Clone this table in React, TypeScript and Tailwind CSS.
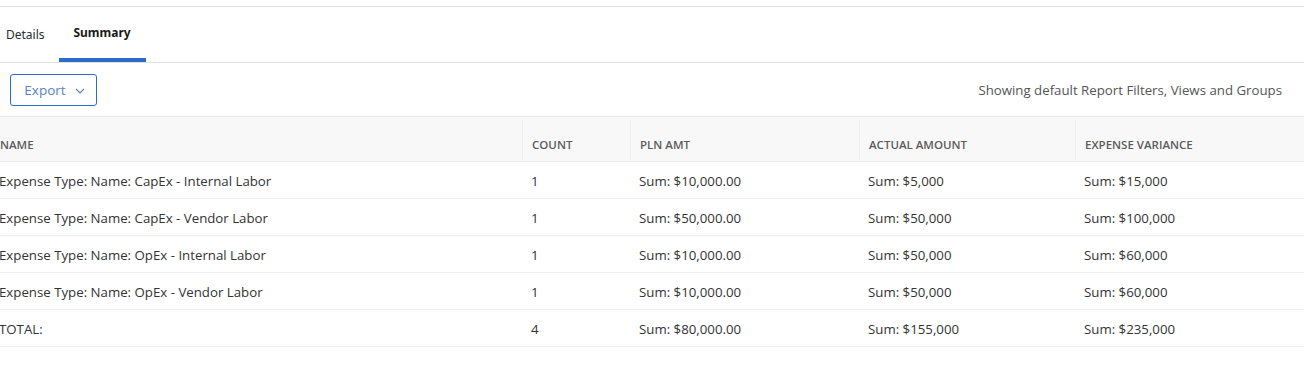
import React from "react";

const rows = [
  ["Expense Type: Name: CapEx - Internal Labor", "1", "Sum: $10,000.00", "Sum: $5,000", "Sum: $15,000"],
  ["Expense Type: Name: CapEx - Vendor Labor", "1", "Sum: $50,000.00", "Sum: $50,000", "Sum: $100,000"],
  ["Expense Type: Name: OpEx - Internal Labor", "1", "Sum: $10,000.00", "Sum: $50,000", "Sum: $60,000"],
  ["Expense Type: Name: OpEx - Vendor Labor", "1", "Sum: $10,000.00", "Sum: $50,000", "Sum: $60,000"],
  ["TOTAL:", "4", "Sum: $80,000.00", "Sum: $155,000", "Sum: $235,000"],
];

const headers = ["NAME", "COUNT", "PLN AMT", "ACTUAL AMOUNT", "EXPENSE VARIANCE"];

export default function App() {
  return (
    <div className="w-[1304px] h-[386px] bg-white overflow-hidden pt-[6px]" style={{ fontFamily: "'Open Sans', 'Liberation Sans', sans-serif" }}>
      <div className="border-t border-[#e3e3e3]">
        <div className="h-[56px] flex items-end border-b border-[#e1e1e1]">
          <div className="h-full flex items-center pl-[6px] pr-[15px] text-[12px] text-[#2c2c2c] pt-[1px]" style={{ fontFamily: "'Noto Sans', 'Open Sans', sans-serif" }}>
            Details
          </div>
          <div className="h-full flex flex-col w-[87px] -ml-[1px]">
            <div className="flex-1 flex items-center justify-center text-[12px] font-bold text-[#1a1a1a]" style={{ fontFamily: "'Noto Sans', 'Open Sans', sans-serif" }}>
              Summary
            </div>
            <div className="h-[4px] bg-[#2d6bc8]" />
          </div>
        </div>
        <div className="h-[53px] flex items-center justify-between pl-[10px] pr-[22px]">
          <button className="h-[32px] w-[87px] border border-[#2d6bc8] rounded-[3px] flex items-center justify-center gap-[9px] text-[13.5px] text-[#5b80c6] mt-[1px] pl-[2px]">
            <span>Export</span>
            <svg width="10" height="6" viewBox="0 0 10 6" fill="none" className="mt-[1px]">
              <path d="M1 1l4 4 4-4" stroke="#5a7fc8" strokeWidth="1.1" />
            </svg>
          </button>
          <div className="text-[13.25px] text-[#555555] mt-[2px]">Showing default Report Filters, Views and Groups</div>
        </div>
        <div className="border-t border-[#e8e8e8]">
          <div className="grid grid-cols-[522px_108px_229px_216px_1fr] h-[45px] bg-[#f8f8f8] border-b border-[#ececec]">
            {headers.map((h, i) => (
              <div
                key={h}
                className={
                  "flex items-center text-[11.5px] font-semibold text-[#5c5c5c] " +
                  (i === 0 ? "pl-0 pt-[11px]" : "pl-[9px] border-l border-[#efefef] mt-[3px] pt-[8px]")
                }
              >
                {h}
              </div>
            ))}
          </div>
          {rows.map((r, ri) => (
            <div key={ri} className="grid grid-cols-[522px_108px_229px_216px_1fr] h-[37px] border-b border-[#efefef]">
              {r.map((c, ci) => (
                <div
                  key={ci}
                  className={"flex items-center pt-[3px] text-[13.25px] text-[#333333] " + (ci === 0 ? "-ml-[1px]" : "pl-[9px]")}
                >
                  {c}
                </div>
              ))}
            </div>
          ))}
        </div>
      </div>
    </div>
  );
}
